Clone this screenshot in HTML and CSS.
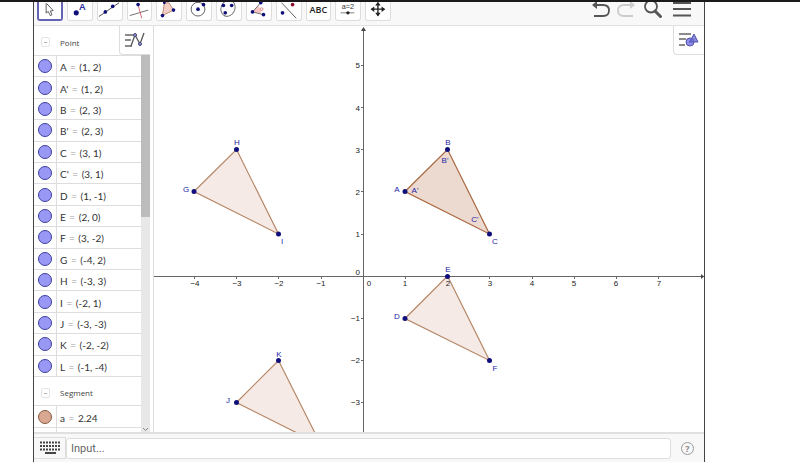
FILE: index.html
```html
<!DOCTYPE html>
<html lang="en">
<head>
  <meta charset="UTF-8">
  <title>Triangles</title>
  <link rel="stylesheet" href="styles.css">
</head>
<body>
  <div class="app">
    <header class="toolbar">
      <div class="tools">
        <button class="tool active" aria-label="Move"><svg viewBox="0 0 26 18"><path d="M8.500 0V11.500L11 9.500L13.500 14.500L15.500 13.500L13.500 9L17 8.500L9 0" fill="#fff" stroke="#444"/></svg></button>
        <button class="tool" aria-label="Point"><svg viewBox="0 0 26 18"><circle class="dot" cx="9" cy="11" r="2.800"/><text class="letter" x="12" y="8">A</text></svg></button>
        <button class="tool" aria-label="Line"><svg viewBox="0 0 26 18"><path d="M1 15L23 0" stroke="#444"/><circle class="dot" cx="8" cy="10" r="2"/><circle class="dot" cx="16" cy="4" r="2"/></svg></button>
        <button class="tool" aria-label="Perpendicular line"><svg viewBox="0 0 26 18"><path d="M2 14L22 8" stroke="#666"/><path d="M11 2L15 17" stroke="#d65c6c"/><circle class="dot" cx="11" cy="2" r="2"/></svg></button>
        <button class="tool" aria-label="Polygon"><svg viewBox="0 0 26 18"><path d="M8 0L6 14L18 8L13 0Z" fill="#f1cfc4" stroke="#b98472"/><circle class="dot" cx="6" cy="14" r="2"/><circle class="dot" cx="18" cy="8" r="2"/><circle class="dot" cx="8" cy="0" r="1.500"/></svg></button>
        <button class="tool" aria-label="Circle"><svg viewBox="0 0 26 18"><circle cx="12" cy="7" r="7.500" stroke="#555"/><circle class="dot" cx="12" cy="7" r="2"/><circle class="dot" cx="18" cy="2" r="2"/></svg></button>
        <button class="tool" aria-label="Ellipse"><svg viewBox="0 0 26 18"><ellipse cx="12" cy="6" rx="7.500" ry="9" transform="rotate(25 12 6)" stroke="#666"/><circle class="dot" cx="7" cy="3" r="2"/><circle class="dot" cx="16" cy="3" r="2"/><circle class="dot" cx="9" cy="11" r="2"/></svg></button>
        <button class="tool" aria-label="Angle"><svg viewBox="0 0 26 18"><path d="M6 10L12 3Q16 7 15 12Z" fill="#f6c4c4"/><path d="M15 0L6 10L18 13" stroke="#666"/><circle cx="16" cy="7" r="1.500" stroke="#e08080"/><circle class="dot" cx="15" cy="0" r="2"/><circle class="dot" cx="6" cy="10" r="2"/><circle class="dot" cx="18" cy="13" r="2"/></svg></button>
        <button class="tool" aria-label="Reflect"><svg viewBox="0 0 26 18"><path d="M5 0L21 17" stroke="#555"/><circle class="dot" cx="6" cy="11" r="2"/><circle cx="17" cy="2" r="2" fill="#8a1030"/></svg></button>
        <button class="tool text-tool">ABC</button>
        <button class="tool" aria-label="Slider"><svg viewBox="0 0 26 18"><text class="slider-label" x="13" y="7">a=2</text><path d="M5 11H20" stroke="#777"/><circle cx="13" cy="11" r="1.800" fill="#222"/></svg></button>
        <button class="tool" aria-label="Move view"><svg viewBox="0 0 26 18"><path d="M13 0V14M6 7H20" stroke="#222" stroke-width="1.500"/><path d="M13 -1L16 3H10ZM13 15L16 11H10ZM5 7L9 4V10ZM21 7L17 4V10Z" fill="#222"/></svg></button>
      </div>
      <div class="actions">
        <button class="action" aria-label="Undo"><svg viewBox="0 0 20 18"><path d="M2 3H11Q17 3 17 8.500Q17 14 11 14H2" stroke="#555" stroke-width="1.800"/><path d="M0 3L5 -1V7Z" fill="#555"/></svg></button>
        <button class="action" aria-label="Redo"><svg viewBox="0 0 20 18"><path d="M16 3H8Q2 3 2 8.500Q2 14 8 14H17" stroke="#ccc" stroke-width="1.800"/><path d="M19 3L14 -1V7Z" fill="#ccc"/></svg></button>
        <button class="action" aria-label="Search"><svg viewBox="0 0 20 18"><circle cx="7" cy="4.500" r="6" stroke="#555" stroke-width="1.800"/><path d="M11 9L16.500 14.500" stroke="#555" stroke-width="3" stroke-linecap="round"/></svg></button>
        <button class="action" aria-label="Menu"><svg viewBox="0 0 20 18"><path d="M1 1H19M1 7H19M1 13.500H19" stroke="#555" stroke-width="2"/></svg></button>
      </div>
    </header>

    <main class="views">
      <section class="algebra">
        <div class="algebra-list">
          <h2 class="group"><button class="toggle" aria-label="Collapse points">–</button>Point</h2>
          <ul class="rows">
            <li><button class="marble" aria-label="Toggle A"></button><span>A <i>=</i> (1, 2)</span></li>
            <li><button class="marble" aria-label="Toggle A'"></button><span>A' <i>=</i> (1, 2)</span></li>
            <li><button class="marble" aria-label="Toggle B"></button><span>B <i>=</i> (2, 3)</span></li>
            <li><button class="marble" aria-label="Toggle B'"></button><span>B' <i>=</i> (2, 3)</span></li>
            <li><button class="marble" aria-label="Toggle C"></button><span>C <i>=</i> (3, 1)</span></li>
            <li><button class="marble" aria-label="Toggle C'"></button><span>C' <i>=</i> (3, 1)</span></li>
            <li><button class="marble" aria-label="Toggle D"></button><span>D <i>=</i> (1, -1)</span></li>
            <li><button class="marble" aria-label="Toggle E"></button><span>E <i>=</i> (2, 0)</span></li>
            <li><button class="marble" aria-label="Toggle F"></button><span>F <i>=</i> (3, -2)</span></li>
            <li><button class="marble" aria-label="Toggle G"></button><span>G <i>=</i> (-4, 2)</span></li>
            <li><button class="marble" aria-label="Toggle H"></button><span>H <i>=</i> (-3, 3)</span></li>
            <li><button class="marble" aria-label="Toggle I"></button><span>I <i>=</i> (-2, 1)</span></li>
            <li><button class="marble" aria-label="Toggle J"></button><span>J <i>=</i> (-3, -3)</span></li>
            <li><button class="marble" aria-label="Toggle K"></button><span>K <i>=</i> (-2, -2)</span></li>
            <li><button class="marble" aria-label="Toggle L"></button><span>L <i>=</i> (-1, -4)</span></li>
          </ul>
          <h2 class="group"><button class="toggle" aria-label="Collapse segments">–</button>Segment</h2>
          <ul class="rows segments">
            <li><button class="marble brown" aria-label="Toggle a"></button><span>a <i>=</i> 2.24</span></li>
            <li></li>
          </ul>
        </div>
        <div class="scrollbar">
          <div class="thumb"></div>
          <svg class="arrow" viewBox="0 0 9 5"><path d="M2 1L4.500 3.500L7 1" stroke="#888"/></svg>
        </div>
        <button class="stylebar" aria-label="Algebra style"><svg viewBox="0 0 30 28"><path d="M5 9H13M5 14H11M5 20H12" stroke="#666" stroke-width="1.300"/><path d="M11 20L15 9L20 18L24 7" stroke="#555" stroke-width="1.300"/><circle cx="15" cy="9" r="1.500" fill="#99f" stroke="#446"/><circle cx="20" cy="18" r="1.500" fill="#99f" stroke="#446"/></svg></button>
      </section>

      <section class="graphics">
        <!-- origin at (0, 0), one unit is 42.2 -->
        <svg class="plot" viewBox="-209 -250 550 406" preserveAspectRatio="xMidYMid slice">
          <path class="axis" d="M-209 .5H341M.5 -246V156"/>
          <path d="M.5 -249L3 -245H-2ZM341 .5L338 -2V3Z" fill="#444"/>
          <path class="axis" d="M-168.500 1V3M-126.500 1V3M-84.500 1V3M-41.500 1V3M42.500 1V3M84.500 1V3M126.500 1V3M169.500 1V3M211.500 1V3M253.500 1V3M295.500 1V3"/>
          <path class="axis" d="M-2 -210.500H0M-2 -168.500H0M-2 -126.500H0M-2 -84.500H0M-2 -41.500H0M-2 42.500H0M-2 84.500H0M-2 126.500H0"/>
          <g class="triangle">
            <path d="M-169 -84.500L-126.500 -126.500L-84.500 -42Z"/>
            <path class="strong" d="M42 -84.500L84.500 -126.500L126.500 -42Z"/>
            <path d="M42 42.500L84.500 0L126.500 84.500Z"/>
            <path d="M-126.500 126.500L-84.500 84.500L-42 169Z"/>
          </g>
          <g class="ticks">
            <text x="-168" y="10">−4</text><text x="-126" y="10">−3</text><text x="-84" y="10">−2</text><text x="-42" y="10">−1</text>
            <text x="6" y="10">0</text><text x="42" y="10">1</text><text x="85" y="10">2</text><text x="127" y="10">3</text>
            <text x="169" y="10">4</text><text x="211" y="10">5</text><text x="253" y="10">6</text><text x="296" y="10">7</text>
          </g>
          <g class="ticks vertical">
            <text x="-3" y="-208">5</text><text x="-3" y="-165">4</text><text x="-3" y="-123">3</text><text x="-3" y="-81">2</text><text x="-3" y="-39">1</text>
            <text x="-3" y="-1">0</text><text x="-3" y="45">−1</text><text x="-3" y="87">−2</text><text x="-3" y="129">−3</text>
          </g>
          <g class="points">
            <circle cx="42" cy="-84.500" r="2.500"/><circle cx="84.500" cy="-126.500" r="2.500"/><circle cx="126.500" cy="-42" r="2.500"/>
            <circle cx="42" cy="42.500" r="2.500"/><circle cx="84.500" cy="0.500" r="2.500"/><circle cx="126.500" cy="84.500" r="2.500"/>
            <circle cx="-169" cy="-84.500" r="2.500"/><circle cx="-126.500" cy="-126.500" r="2.500"/><circle cx="-84.500" cy="-42" r="2.500"/>
            <circle cx="-126.500" cy="126.500" r="2.500"/><circle cx="-84.500" cy="84.500" r="2.500"/>
          </g>
          <g class="labels">
            <text x="34" y="-84">A</text><text x="52" y="-83">A'</text>
            <text x="85" y="-131">B</text><text x="82" y="-113">B'</text>
            <text x="132" y="-32">C</text><text x="112" y="-54">C'</text>
            <text x="34" y="43">D</text><text x="85" y="-4">E</text><text x="132" y="95">F</text>
            <text x="-177" y="-84">G</text><text x="-126" y="-131">H</text><text x="-81" y="-32">I</text>
            <text x="-135" y="127">J</text><text x="-84" y="81">K</text>
          </g>
        </svg>
        <button class="stylebar" aria-label="Graphics style"><svg viewBox="0 0 30 28"><path d="M5 8H17M5 13H12M5 19H11" stroke="#666" stroke-width="1.300"/><circle cx="16" cy="16" r="4" fill="#8e8eea" stroke="#5555b0"/><path d="M20 8L24 16H15.500Z" fill="#6c6cd0" fill-opacity=".8" stroke="#5555b0"/></svg></button>
      </section>
    </main>

    <footer class="inputbar">
      <button class="keyboard" aria-label="Keyboard"><svg viewBox="0 0 22 14"><path d="M1 1.500H21M1 5H21M1 8.500H21" stroke="#444" stroke-width="2" stroke-dasharray="2 1"/><path d="M6 12H17" stroke="#444" stroke-width="2"/></svg></button>
      <input class="command" type="text" placeholder="Input..." aria-label="Input">
      <button class="help" aria-label="Help">?</button>
    </footer>
  </div>
</body>
</html>
```
FILE: styles.css
```css
* {
  box-sizing: border-box;
}

body {
  margin: 0;
  background: #fff;
  border-top: 2px solid #1c1a1c;
  font-family: "Open Sans", sans-serif;
}

button {
  padding: 0;
  border: none;
  background: none;
  font-family: inherit;
}

svg {
  display: block;
  fill: none;
}

ul,
h2 {
  margin: 0;
  padding: 0;
  list-style: none;
}

.app {
  margin: 0 95px 0 33px;
  border: solid #444;
  border-width: 0 1px;
}

/* toolbar */
.toolbar {
  display: flex;
  justify-content: space-between;
  height: 24px;
  padding: 0 12px 0 3px;
  background: #f8f8f8;
  border-bottom: 1px solid #e2e2e2;
  overflow: hidden;
}

.tools {
  display: grid;
  grid-template-columns: repeat(12, 1fr);
  gap: 4px;
  width: 354px;
}

.tool {
  height: 19px;
  border: 1px solid #ddd;
  border-top: none;
  border-radius: 0 0 3px 3px;
  background: #fff;
  overflow: hidden;
}

.tool svg {
  width: 100%;
  height: 18px;
}

.tool.active {
  border: 2px solid #6464b4;
  border-top: none;
}

.text-tool {
  padding-bottom: 3px;
  font-size: 9px;
  font-weight: 600;
  color: #222;
}

.dot {
  fill: #10107a;
}

.letter {
  font-family: "Liberation Sans", Arial, sans-serif;
  font-size: 10px;
  font-weight: 700;
  fill: #2a2aa0;
}

.slider-label {
  font-family: "Liberation Sans", Arial, sans-serif;
  font-size: 8px;
  text-anchor: middle;
  fill: #333;
}

.actions {
  display: flex;
  gap: 8px;
}

.action svg {
  width: 20px;
  height: 18px;
}

.action {
  height: 18px;
}

.action:first-child {
  margin-right: -4px;
}

/* views */
.views {
  display: flex;
  height: 406px;
}

.algebra {
  position: relative;
  display: flex;
  flex: none;
  width: 120px;
  padding-right: 3px;
  border-right: 1px solid #ddd;
  overflow: hidden;
}

.algebra-list {
  flex: 1;
}

.group {
  display: flex;
  align-items: center;
  gap: 10px;
  height: 29px;
  padding: 3px 0 0 7px;
  font-size: 8px;
  font-weight: 400;
  color: #444;
}

.toggle {
  width: 9px;
  height: 10px;
  border: 1px solid #e4e4e4;
  border-radius: 2px;
  font-size: 7px;
  line-height: 8px;
  color: #777;
}

.rows {
  display: grid;
  grid-template-rows: repeat(15, 1fr);
  height: 321px;
}

.rows.segments {
  grid-template-rows: 22px 6px;
  height: 28px;
}

.rows li {
  display: flex;
  align-items: center;
  border-top: 1px solid #ddd;
  font-family: Lato, sans-serif;
  font-size: 10px;
  color: #333;
  background: linear-gradient(#ddd, #ddd) 22px 0 / 1px 100% no-repeat;
}

.rows span {
  padding: 2px 0 0 8px;
  white-space: nowrap;
}

.rows i {
  margin: 0 1px;
  font-style: normal;
  color: #999;
}

.rows + .group {
  border-top: 1px solid #ddd;
}

.marble {
  width: 14px;
  height: 14px;
  margin: 0 0 0 4px;
  border: 1px solid #3c3ca0;
  border-radius: 50%;
  background: #9999f5;
}

.marble.brown {
  border-color: #8a5840;
  background: #d8a890;
}

.scrollbar {
  display: flex;
  flex-direction: column;
  justify-content: space-between;
  width: 9px;
  background: #e8e8e8;
}

.thumb {
  height: 191px;
  background: #bcbcbc;
}

.arrow {
  width: 9px;
  height: 5px;
}

.stylebar {
  position: absolute;
  top: 0;
  right: 0;
  width: 31px;
  height: 29px;
  border: solid #ddd;
  border-width: 0 0 1px 1px;
  border-radius: 0 0 0 4px;
  background: #fff;
}

.algebra .stylebar {
  right: 3px;
}

.graphics {
  position: relative;
  flex: 1;
  min-width: 0;
}

.plot {
  width: 100%;
  height: 100%;
}

.axis {
  stroke: #666;
}

.triangle path {
  fill: #993300;
  fill-opacity: .1;
  stroke: #b88868;
  stroke-width: 1.2px;
}

.triangle .strong {
  fill-opacity: .19;
  stroke: #aa6840;
}

.ticks text,
.labels text {
  font-family: "Liberation Sans", Arial, sans-serif;
  font-size: 8px;
  text-anchor: middle;
  fill: #222;
}

.ticks.vertical text {
  text-anchor: end;
}

.points circle {
  fill: #10107c;
}

.labels text {
  fill: #2424a8;
}

/* input bar */
.inputbar {
  display: flex;
  align-items: center;
  height: 30px;
  background: #f8f8f8;
  border-top: 2px solid #e0e0e0;
}

.keyboard {
  display: flex;
  align-items: center;
  justify-content: center;
  width: 32px;
  height: 22px;
  border: solid #ddd;
  border-width: 1px 1px 1px 0;
}

.keyboard svg {
  width: 22px;
  height: 14px;
}

.command {
  flex: 1;
  min-width: 0;
  height: 21px;
  padding: 0 4px;
  border: 1px solid #ddd;
  border-radius: 3px;
  background: #fff;
  font-family: Roboto, sans-serif;
  font-size: 11px;
}

.command::placeholder {
  color: #666;
}

.help {
  width: 13px;
  height: 13px;
  margin: 0 10px;
  border: 1px solid #999;
  border-radius: 50%;
  font-size: 9px;
  font-weight: 700;
  line-height: 11px;
  color: #888;
}
```
